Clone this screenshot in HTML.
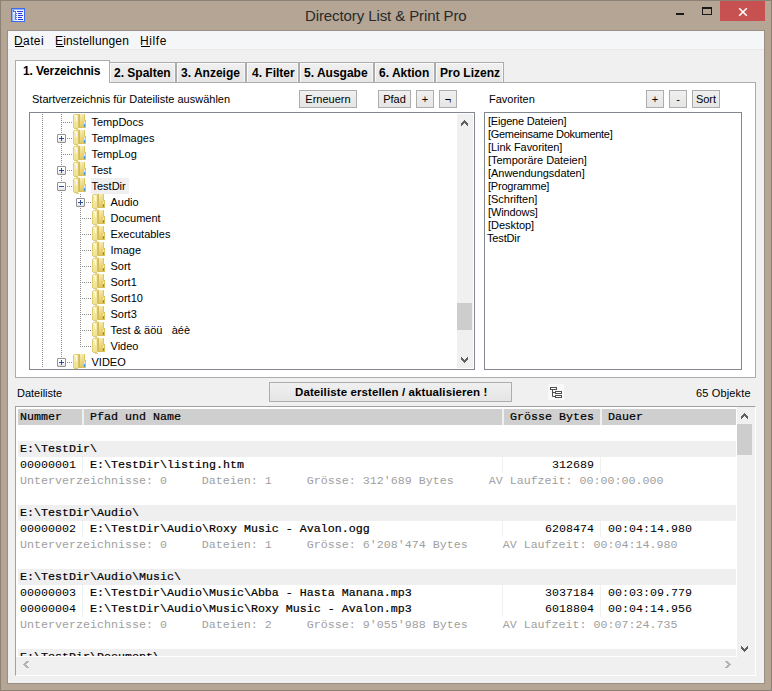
<!DOCTYPE html><html><head><meta charset="utf-8"><title>Directory List &amp; Print Pro</title><style>
*{margin:0;padding:0;box-sizing:border-box}
html,body{width:772px;height:691px;overflow:hidden;background:#b4a595;font-family:'Liberation Sans', sans-serif;}
.a{position:absolute}
.t{position:absolute;white-space:pre;font-size:11px;line-height:16px;color:#000}
.btn{position:absolute;border:1px solid #adadad;background:linear-gradient(#f0f0f0,#e5e5e5);}
.m{position:absolute;font-family:'Liberation Mono', monospace;font-size:11.67px;line-height:16px;white-space:pre;font-weight:normal;color:#000;-webkit-text-stroke:0.2px #000}
.g{color:#a0a0a0;-webkit-text-stroke:0}
.n{-webkit-text-stroke:0}
.d{position:absolute;background:#f0f0f0}
</style></head><body>
<div class="a" style="left:0;top:0;width:772px;height:691px;border:1px solid #8c8175;"></div>
<svg class="a" style="left:11px;top:8px" width="14" height="14" viewBox="0 0 14 14" shape-rendering="crispEdges">
<rect x="0" y="0" width="14" height="14" fill="#3b6cf0"/>
<rect x="1" y="1" width="12" height="12" fill="#8fb0f6"/>
<rect x="1.5" y="1.5" width="11" height="11" fill="#eef6ff"/>
<rect x="2" y="6" width="2" height="7" fill="#c8dcf8"/>
<rect x="2" y="2" width="1" height="2" fill="#4a68dc"/>
<rect x="3" y="3" width="2" height="1" fill="#4a68dc"/>
<rect x="4" y="4" width="1" height="8" fill="#5a78e0"/>
<rect x="5" y="5" width="1" height="1" fill="#5a78e0"/>
<rect x="5" y="7" width="1" height="1" fill="#5a78e0"/>
<rect x="5" y="9" width="1" height="1" fill="#5a78e0"/>
<rect x="5" y="11" width="1" height="1" fill="#5a78e0"/>
<rect x="6" y="3" width="6" height="1" fill="#3434d4"/>
<rect x="7" y="5" width="4" height="1" fill="#3434d4"/>
<rect x="7" y="7" width="5" height="1" fill="#3434d4"/>
<rect x="7" y="9" width="4" height="1" fill="#3434d4"/>
<rect x="7" y="11" width="5" height="1" fill="#3434d4"/>
</svg>
<div class="t" style="left:305px;top:6px;font-size:15px;line-height:20px;color:#2a2a2a;letter-spacing:-0.1px">Directory List &amp; Print Pro</div>
<div class="a" style="left:676px;top:13px;width:8px;height:2px;background:#1a1a1a"></div>
<div class="a" style="left:702px;top:7px;width:10px;height:8px;border:1px solid #1a1a1a;border-top-width:2px"></div>
<div class="a" style="left:720px;top:1px;width:45px;height:20px;background:#c75050"></div>
<svg class="a" style="left:738px;top:7px" width="10" height="10" viewBox="0 0 10 10"><path d="M1.2 1.2L8.8 8.8M8.8 1.2L1.2 8.8" stroke="#fff" stroke-width="1.6"/></svg>
<div class="a" style="left:7px;top:30px;width:758px;height:654px;background:#f0f0f0;border:1px solid #9a8f83"></div>
<div class="a" style="left:8px;top:31px;width:756px;height:18px;background:#f5f6f7"></div>
<div class="a" style="left:8px;top:49px;width:756px;height:1px;background:#e8e9ea"></div>
<div class="t" style="left:14px;top:33px;font-size:12px;letter-spacing:0.4px">Datei</div>
<div class="a" style="left:15px;top:46px;width:9px;height:1px;background:#000"></div>
<div class="t" style="left:55px;top:33px;font-size:12px;letter-spacing:0.15px">Einstellungen</div>
<div class="a" style="left:56px;top:46px;width:8px;height:1px;background:#000"></div>
<div class="t" style="left:140px;top:33px;font-size:12px;letter-spacing:0.6px">Hilfe</div>
<div class="a" style="left:141px;top:46px;width:9px;height:1px;background:#000"></div>
<div class="a" style="left:15px;top:82px;width:741px;height:296px;background:#fff;border:1px solid #acacac"></div>
<div class="a" style="left:109px;top:62px;width:67px;height:21px;border:1px solid #acacac;background:linear-gradient(#f0f0f0,#e5e5e5);box-shadow:inset 1px 1px 0 #fbfbfb,inset -1px 0 0 #f6f6f6"></div>
<div class="t" style="left:114px;top:65px;font-weight:bold;font-size:12px">2. Spalten</div>
<div class="a" style="left:176px;top:62px;width:70px;height:21px;border:1px solid #acacac;background:linear-gradient(#f0f0f0,#e5e5e5);box-shadow:inset 1px 1px 0 #fbfbfb,inset -1px 0 0 #f6f6f6"></div>
<div class="t" style="left:181px;top:65px;font-weight:bold;font-size:12px">3. Anzeige</div>
<div class="a" style="left:246px;top:62px;width:53px;height:21px;border:1px solid #acacac;background:linear-gradient(#f0f0f0,#e5e5e5);box-shadow:inset 1px 1px 0 #fbfbfb,inset -1px 0 0 #f6f6f6"></div>
<div class="t" style="left:252px;top:65px;font-weight:bold;font-size:12px">4. Filter</div>
<div class="a" style="left:299px;top:62px;width:75px;height:21px;border:1px solid #acacac;background:linear-gradient(#f0f0f0,#e5e5e5);box-shadow:inset 1px 1px 0 #fbfbfb,inset -1px 0 0 #f6f6f6"></div>
<div class="t" style="left:304px;top:65px;font-weight:bold;font-size:12px">5. Ausgabe</div>
<div class="a" style="left:374px;top:62px;width:61px;height:21px;border:1px solid #acacac;background:linear-gradient(#f0f0f0,#e5e5e5);box-shadow:inset 1px 1px 0 #fbfbfb,inset -1px 0 0 #f6f6f6"></div>
<div class="t" style="left:379px;top:65px;font-weight:bold;font-size:12px">6. Aktion</div>
<div class="a" style="left:435px;top:62px;width:69px;height:21px;border:1px solid #acacac;background:linear-gradient(#f0f0f0,#e5e5e5);box-shadow:inset 1px 1px 0 #fbfbfb,inset -1px 0 0 #f6f6f6"></div>
<div class="t" style="left:440px;top:65px;font-weight:bold;font-size:12px">Pro Lizenz</div>
<div class="a" style="left:15px;top:60px;width:95px;height:23px;border:1px solid #acacac;border-bottom:none;background:#fff"></div>
<div class="a" style="left:16px;top:82px;width:93px;height:1px;background:#fff"></div>
<div class="t" style="left:23px;top:63px;font-weight:bold;font-size:12px;letter-spacing:-0.15px">1. Verzeichnis</div>
<div class="t" style="left:32px;top:91px;letter-spacing:0px">Startverzeichnis für Dateiliste auswählen</div>
<div class="btn" style="left:299px;top:90px;width:58px;height:18px"></div>
<div class="t" style="left:299px;top:91px;width:58px;text-align:center">Erneuern</div>
<div class="btn" style="left:378px;top:90px;width:33px;height:18px"></div>
<div class="t" style="left:378px;top:91px;width:33px;text-align:center">Pfad</div>
<div class="btn" style="left:416px;top:90px;width:18px;height:18px"></div>
<div class="t" style="left:416px;top:91px;width:18px;text-align:center">+</div>
<div class="btn" style="left:439px;top:90px;width:18px;height:18px"></div>
<div class="t" style="left:439px;top:91px;width:18px;text-align:center">¬</div>
<div class="t" style="left:489px;top:91px">Favoriten</div>
<div class="btn" style="left:646px;top:90px;width:18px;height:18px"></div>
<div class="t" style="left:646px;top:91px;width:18px;text-align:center">+</div>
<div class="btn" style="left:669px;top:90px;width:18px;height:18px"></div>
<div class="t" style="left:669px;top:91px;width:18px;text-align:center">-</div>
<div class="btn" style="left:692px;top:90px;width:28px;height:18px"></div>
<div class="t" style="left:692px;top:91px;width:28px;text-align:center">Sort</div>
<div class="a" style="left:29px;top:112px;width:446px;height:258px;border:1px solid #828790;background:#fff"></div>
<svg width="0" height="0" style="position:absolute"><defs>
<linearGradient id="gf" x1="0" y1="0" x2="0" y2="1"><stop offset="0" stop-color="#f8f0b0"/><stop offset="1" stop-color="#efe092"/></linearGradient>
<linearGradient id="gb" x1="0" y1="0" x2="0.3" y2="1"><stop offset="0" stop-color="#faf2b6"/><stop offset="1" stop-color="#e0c660"/></linearGradient>
</defs></svg>
<div class="a" style="left:30px;top:113px;width:444px;height:256px;overflow:hidden">
<div class="a" style="left:-30px;top:-113px;width:772px;height:691px">
<div class="a" style="left:42px;top:112px;width:1px;height:256px;background:repeating-linear-gradient(to bottom,#8c8c8c 0 1px,transparent 1px 2px)"></div>
<div class="a" style="left:61px;top:112px;width:1px;height:251px;background:repeating-linear-gradient(to bottom,#8c8c8c 0 1px,transparent 1px 2px)"></div>
<div class="a" style="left:80px;top:194px;width:1px;height:153px;background:repeating-linear-gradient(to bottom,#8c8c8c 0 1px,transparent 1px 2px)"></div>
<div class="a" style="left:63px;top:122px;width:9px;height:1px;background:repeating-linear-gradient(to right,#8c8c8c 0 1px,transparent 1px 2px)"></div>
<svg class="a" style="left:73px;top:114px" width="13" height="16" viewBox="0 0 13 16" shape-rendering="crispEdges">
<rect x="6" y="0" width="6" height="14" fill="url(#gb)"/>
<rect x="12" y="6" width="1" height="8" fill="#dcc35e"/>
<rect x="11" y="0" width="1" height="6" fill="#dfc764"/>
<rect x="6" y="0" width="1" height="14" fill="#d4bc5c"/>
<rect x="7" y="13" width="5" height="1" fill="#d9c05a"/>
<rect x="1" y="0" width="5" height="1" fill="#e6d27a"/>
<rect x="0" y="1" width="1" height="13" fill="#e2cd72"/>
<rect x="1" y="1" width="4" height="13" fill="url(#gf)"/>
<rect x="5" y="1" width="1" height="13" fill="#dcc466"/>
<rect x="1" y="14" width="4" height="1" fill="#e0ca6c"/>
<rect x="3" y="15" width="3" height="1" fill="#e6d88e"/>
<rect x="2" y="1" width="1" height="2" fill="#fffef4"/>
<rect x="3" y="2" width="1" height="5" fill="#fffef4"/>
<rect x="11" y="8" width="1" height="2" fill="#e4f0f6"/>
<rect x="11" y="10" width="1" height="3" fill="#3a98de"/>
</svg>
<div class="t" style="left:91.5px;top:114px;letter-spacing:0px">TempDocs</div>
<div class="a" style="left:67px;top:138px;width:5px;height:1px;background:repeating-linear-gradient(to right,#8c8c8c 0 1px,transparent 1px 2px)"></div>
<svg class="a" style="left:73px;top:130px" width="13" height="16" viewBox="0 0 13 16" shape-rendering="crispEdges">
<rect x="6" y="0" width="6" height="14" fill="url(#gb)"/>
<rect x="12" y="6" width="1" height="8" fill="#dcc35e"/>
<rect x="11" y="0" width="1" height="6" fill="#dfc764"/>
<rect x="6" y="0" width="1" height="14" fill="#d4bc5c"/>
<rect x="7" y="13" width="5" height="1" fill="#d9c05a"/>
<rect x="1" y="0" width="5" height="1" fill="#e6d27a"/>
<rect x="0" y="1" width="1" height="13" fill="#e2cd72"/>
<rect x="1" y="1" width="4" height="13" fill="url(#gf)"/>
<rect x="5" y="1" width="1" height="13" fill="#dcc466"/>
<rect x="1" y="14" width="4" height="1" fill="#e0ca6c"/>
<rect x="3" y="15" width="3" height="1" fill="#e6d88e"/>
<rect x="2" y="1" width="1" height="2" fill="#fffef4"/>
<rect x="3" y="2" width="1" height="5" fill="#fffef4"/>
<rect x="11" y="8" width="1" height="2" fill="#e4f0f6"/>
<rect x="11" y="10" width="1" height="3" fill="#3a98de"/>
</svg>
<div class="t" style="left:91.5px;top:130px;letter-spacing:0px">TempImages</div>
<div class="a" style="left:57px;top:133px;width:9px;height:11px;background:#fff"></div>
<div class="a" style="left:57px;top:134px;width:9px;height:9px;border:1px solid #919191;border-radius:1px;background:linear-gradient(#fff 0,#fff 45%,#e2e2e2 100%)"></div>
<div class="a" style="left:59px;top:138px;width:5px;height:1px;background:#2b4f9c"></div>
<div class="a" style="left:61px;top:136px;width:1px;height:5px;background:#2b4f9c"></div>
<div class="a" style="left:63px;top:154px;width:9px;height:1px;background:repeating-linear-gradient(to right,#8c8c8c 0 1px,transparent 1px 2px)"></div>
<svg class="a" style="left:73px;top:146px" width="13" height="16" viewBox="0 0 13 16" shape-rendering="crispEdges">
<rect x="6" y="0" width="6" height="14" fill="url(#gb)"/>
<rect x="12" y="6" width="1" height="8" fill="#dcc35e"/>
<rect x="11" y="0" width="1" height="6" fill="#dfc764"/>
<rect x="6" y="0" width="1" height="14" fill="#d4bc5c"/>
<rect x="7" y="13" width="5" height="1" fill="#d9c05a"/>
<rect x="1" y="0" width="5" height="1" fill="#e6d27a"/>
<rect x="0" y="1" width="1" height="13" fill="#e2cd72"/>
<rect x="1" y="1" width="4" height="13" fill="url(#gf)"/>
<rect x="5" y="1" width="1" height="13" fill="#dcc466"/>
<rect x="1" y="14" width="4" height="1" fill="#e0ca6c"/>
<rect x="3" y="15" width="3" height="1" fill="#e6d88e"/>
<rect x="2" y="1" width="1" height="2" fill="#fffef4"/>
<rect x="3" y="2" width="1" height="5" fill="#fffef4"/>
<rect x="11" y="8" width="1" height="2" fill="#e4f0f6"/>
<rect x="11" y="10" width="1" height="3" fill="#3a98de"/>
</svg>
<div class="t" style="left:91.5px;top:146px;letter-spacing:0px">TempLog</div>
<div class="a" style="left:67px;top:170px;width:5px;height:1px;background:repeating-linear-gradient(to right,#8c8c8c 0 1px,transparent 1px 2px)"></div>
<svg class="a" style="left:73px;top:162px" width="13" height="16" viewBox="0 0 13 16" shape-rendering="crispEdges">
<rect x="6" y="0" width="6" height="14" fill="url(#gb)"/>
<rect x="12" y="6" width="1" height="8" fill="#dcc35e"/>
<rect x="11" y="0" width="1" height="6" fill="#dfc764"/>
<rect x="6" y="0" width="1" height="14" fill="#d4bc5c"/>
<rect x="7" y="13" width="5" height="1" fill="#d9c05a"/>
<rect x="1" y="0" width="5" height="1" fill="#e6d27a"/>
<rect x="0" y="1" width="1" height="13" fill="#e2cd72"/>
<rect x="1" y="1" width="4" height="13" fill="url(#gf)"/>
<rect x="5" y="1" width="1" height="13" fill="#dcc466"/>
<rect x="1" y="14" width="4" height="1" fill="#e0ca6c"/>
<rect x="3" y="15" width="3" height="1" fill="#e6d88e"/>
<rect x="2" y="1" width="1" height="2" fill="#fffef4"/>
<rect x="3" y="2" width="1" height="5" fill="#fffef4"/>
<rect x="11" y="8" width="1" height="2" fill="#e4f0f6"/>
<rect x="11" y="10" width="1" height="3" fill="#3a98de"/>
</svg>
<div class="t" style="left:91.5px;top:162px;letter-spacing:0px">Test</div>
<div class="a" style="left:57px;top:165px;width:9px;height:11px;background:#fff"></div>
<div class="a" style="left:57px;top:166px;width:9px;height:9px;border:1px solid #919191;border-radius:1px;background:linear-gradient(#fff 0,#fff 45%,#e2e2e2 100%)"></div>
<div class="a" style="left:59px;top:170px;width:5px;height:1px;background:#2b4f9c"></div>
<div class="a" style="left:61px;top:168px;width:1px;height:5px;background:#2b4f9c"></div>
<div class="a" style="left:67px;top:186px;width:5px;height:1px;background:repeating-linear-gradient(to right,#8c8c8c 0 1px,transparent 1px 2px)"></div>
<svg class="a" style="left:73px;top:178px" width="13" height="16" viewBox="0 0 13 16" shape-rendering="crispEdges">
<rect x="6" y="0" width="6" height="14" fill="url(#gb)"/>
<rect x="12" y="6" width="1" height="8" fill="#dcc35e"/>
<rect x="11" y="0" width="1" height="6" fill="#dfc764"/>
<rect x="6" y="0" width="1" height="14" fill="#d4bc5c"/>
<rect x="7" y="13" width="5" height="1" fill="#d9c05a"/>
<rect x="1" y="0" width="5" height="1" fill="#e6d27a"/>
<rect x="0" y="1" width="1" height="13" fill="#e2cd72"/>
<rect x="1" y="1" width="4" height="13" fill="url(#gf)"/>
<rect x="5" y="1" width="1" height="13" fill="#dcc466"/>
<rect x="1" y="14" width="4" height="1" fill="#e0ca6c"/>
<rect x="3" y="15" width="3" height="1" fill="#e6d88e"/>
<rect x="2" y="1" width="1" height="2" fill="#fffef4"/>
<rect x="3" y="2" width="1" height="5" fill="#fffef4"/>
<rect x="11" y="8" width="1" height="2" fill="#e4f0f6"/>
<rect x="11" y="10" width="1" height="3" fill="#3a98de"/>
</svg>
<div class="a" style="left:91px;top:178px;width:38px;height:16px;background:#f0f0f0"></div>
<div class="t" style="left:91.5px;top:178px;letter-spacing:0px">TestDir</div>
<div class="a" style="left:57px;top:181px;width:9px;height:11px;background:#fff"></div>
<div class="a" style="left:57px;top:182px;width:9px;height:9px;border:1px solid #919191;border-radius:1px;background:linear-gradient(#fff 0,#fff 45%,#e2e2e2 100%)"></div>
<div class="a" style="left:59px;top:186px;width:5px;height:1px;background:#2b4f9c"></div>
<div class="a" style="left:86px;top:202px;width:5px;height:1px;background:repeating-linear-gradient(to right,#8c8c8c 0 1px,transparent 1px 2px)"></div>
<svg class="a" style="left:92px;top:194px" width="13" height="16" viewBox="0 0 13 16" shape-rendering="crispEdges">
<rect x="6" y="0" width="6" height="14" fill="url(#gb)"/>
<rect x="12" y="6" width="1" height="8" fill="#dcc35e"/>
<rect x="11" y="0" width="1" height="6" fill="#dfc764"/>
<rect x="6" y="0" width="1" height="14" fill="#d4bc5c"/>
<rect x="7" y="13" width="5" height="1" fill="#d9c05a"/>
<rect x="1" y="0" width="5" height="1" fill="#e6d27a"/>
<rect x="0" y="1" width="1" height="13" fill="#e2cd72"/>
<rect x="1" y="1" width="4" height="13" fill="url(#gf)"/>
<rect x="5" y="1" width="1" height="13" fill="#dcc466"/>
<rect x="1" y="14" width="4" height="1" fill="#e0ca6c"/>
<rect x="3" y="15" width="3" height="1" fill="#e6d88e"/>
<rect x="2" y="1" width="1" height="2" fill="#fffef4"/>
<rect x="3" y="2" width="1" height="5" fill="#fffef4"/>
<rect x="11" y="8" width="1" height="2" fill="#e4f0f6"/>
<rect x="11" y="10" width="1" height="3" fill="#3a98de"/>
</svg>
<div class="t" style="left:110.5px;top:194px;letter-spacing:0px">Audio</div>
<div class="a" style="left:76px;top:197px;width:9px;height:11px;background:#fff"></div>
<div class="a" style="left:76px;top:198px;width:9px;height:9px;border:1px solid #919191;border-radius:1px;background:linear-gradient(#fff 0,#fff 45%,#e2e2e2 100%)"></div>
<div class="a" style="left:78px;top:202px;width:5px;height:1px;background:#2b4f9c"></div>
<div class="a" style="left:80px;top:200px;width:1px;height:5px;background:#2b4f9c"></div>
<div class="a" style="left:82px;top:218px;width:9px;height:1px;background:repeating-linear-gradient(to right,#8c8c8c 0 1px,transparent 1px 2px)"></div>
<svg class="a" style="left:92px;top:210px" width="13" height="16" viewBox="0 0 13 16" shape-rendering="crispEdges">
<rect x="6" y="0" width="6" height="14" fill="url(#gb)"/>
<rect x="12" y="6" width="1" height="8" fill="#dcc35e"/>
<rect x="11" y="0" width="1" height="6" fill="#dfc764"/>
<rect x="6" y="0" width="1" height="14" fill="#d4bc5c"/>
<rect x="7" y="13" width="5" height="1" fill="#d9c05a"/>
<rect x="1" y="0" width="5" height="1" fill="#e6d27a"/>
<rect x="0" y="1" width="1" height="13" fill="#e2cd72"/>
<rect x="1" y="1" width="4" height="13" fill="url(#gf)"/>
<rect x="5" y="1" width="1" height="13" fill="#dcc466"/>
<rect x="1" y="14" width="4" height="1" fill="#e0ca6c"/>
<rect x="3" y="15" width="3" height="1" fill="#e6d88e"/>
<rect x="2" y="1" width="1" height="2" fill="#fffef4"/>
<rect x="3" y="2" width="1" height="5" fill="#fffef4"/>
<rect x="11" y="8" width="1" height="2" fill="#e4f0f6"/>
<rect x="11" y="10" width="1" height="3" fill="#3a98de"/>
</svg>
<div class="t" style="left:110.5px;top:210px;letter-spacing:0px">Document</div>
<div class="a" style="left:82px;top:234px;width:9px;height:1px;background:repeating-linear-gradient(to right,#8c8c8c 0 1px,transparent 1px 2px)"></div>
<svg class="a" style="left:92px;top:226px" width="13" height="16" viewBox="0 0 13 16" shape-rendering="crispEdges">
<rect x="6" y="0" width="6" height="14" fill="url(#gb)"/>
<rect x="12" y="6" width="1" height="8" fill="#dcc35e"/>
<rect x="11" y="0" width="1" height="6" fill="#dfc764"/>
<rect x="6" y="0" width="1" height="14" fill="#d4bc5c"/>
<rect x="7" y="13" width="5" height="1" fill="#d9c05a"/>
<rect x="1" y="0" width="5" height="1" fill="#e6d27a"/>
<rect x="0" y="1" width="1" height="13" fill="#e2cd72"/>
<rect x="1" y="1" width="4" height="13" fill="url(#gf)"/>
<rect x="5" y="1" width="1" height="13" fill="#dcc466"/>
<rect x="1" y="14" width="4" height="1" fill="#e0ca6c"/>
<rect x="3" y="15" width="3" height="1" fill="#e6d88e"/>
<rect x="2" y="1" width="1" height="2" fill="#fffef4"/>
<rect x="3" y="2" width="1" height="5" fill="#fffef4"/>
<rect x="11" y="8" width="1" height="2" fill="#e4f0f6"/>
<rect x="11" y="10" width="1" height="3" fill="#3a98de"/>
</svg>
<div class="t" style="left:110.5px;top:226px;letter-spacing:0px">Executables</div>
<div class="a" style="left:82px;top:250px;width:9px;height:1px;background:repeating-linear-gradient(to right,#8c8c8c 0 1px,transparent 1px 2px)"></div>
<svg class="a" style="left:92px;top:242px" width="13" height="16" viewBox="0 0 13 16" shape-rendering="crispEdges">
<rect x="6" y="0" width="6" height="14" fill="url(#gb)"/>
<rect x="12" y="6" width="1" height="8" fill="#dcc35e"/>
<rect x="11" y="0" width="1" height="6" fill="#dfc764"/>
<rect x="6" y="0" width="1" height="14" fill="#d4bc5c"/>
<rect x="7" y="13" width="5" height="1" fill="#d9c05a"/>
<rect x="1" y="0" width="5" height="1" fill="#e6d27a"/>
<rect x="0" y="1" width="1" height="13" fill="#e2cd72"/>
<rect x="1" y="1" width="4" height="13" fill="url(#gf)"/>
<rect x="5" y="1" width="1" height="13" fill="#dcc466"/>
<rect x="1" y="14" width="4" height="1" fill="#e0ca6c"/>
<rect x="3" y="15" width="3" height="1" fill="#e6d88e"/>
<rect x="2" y="1" width="1" height="2" fill="#fffef4"/>
<rect x="3" y="2" width="1" height="5" fill="#fffef4"/>
<rect x="11" y="8" width="1" height="2" fill="#e4f0f6"/>
<rect x="11" y="10" width="1" height="3" fill="#3a98de"/>
</svg>
<div class="t" style="left:110.5px;top:242px;letter-spacing:0px">Image</div>
<div class="a" style="left:82px;top:266px;width:9px;height:1px;background:repeating-linear-gradient(to right,#8c8c8c 0 1px,transparent 1px 2px)"></div>
<svg class="a" style="left:92px;top:258px" width="13" height="16" viewBox="0 0 13 16" shape-rendering="crispEdges">
<rect x="6" y="0" width="6" height="14" fill="url(#gb)"/>
<rect x="12" y="6" width="1" height="8" fill="#dcc35e"/>
<rect x="11" y="0" width="1" height="6" fill="#dfc764"/>
<rect x="6" y="0" width="1" height="14" fill="#d4bc5c"/>
<rect x="7" y="13" width="5" height="1" fill="#d9c05a"/>
<rect x="1" y="0" width="5" height="1" fill="#e6d27a"/>
<rect x="0" y="1" width="1" height="13" fill="#e2cd72"/>
<rect x="1" y="1" width="4" height="13" fill="url(#gf)"/>
<rect x="5" y="1" width="1" height="13" fill="#dcc466"/>
<rect x="1" y="14" width="4" height="1" fill="#e0ca6c"/>
<rect x="3" y="15" width="3" height="1" fill="#e6d88e"/>
<rect x="2" y="1" width="1" height="2" fill="#fffef4"/>
<rect x="3" y="2" width="1" height="5" fill="#fffef4"/>
<rect x="11" y="8" width="1" height="2" fill="#e4f0f6"/>
<rect x="11" y="10" width="1" height="3" fill="#3a98de"/>
</svg>
<div class="t" style="left:110.5px;top:258px;letter-spacing:0px">Sort</div>
<div class="a" style="left:82px;top:282px;width:9px;height:1px;background:repeating-linear-gradient(to right,#8c8c8c 0 1px,transparent 1px 2px)"></div>
<svg class="a" style="left:92px;top:274px" width="13" height="16" viewBox="0 0 13 16" shape-rendering="crispEdges">
<rect x="6" y="0" width="6" height="14" fill="url(#gb)"/>
<rect x="12" y="6" width="1" height="8" fill="#dcc35e"/>
<rect x="11" y="0" width="1" height="6" fill="#dfc764"/>
<rect x="6" y="0" width="1" height="14" fill="#d4bc5c"/>
<rect x="7" y="13" width="5" height="1" fill="#d9c05a"/>
<rect x="1" y="0" width="5" height="1" fill="#e6d27a"/>
<rect x="0" y="1" width="1" height="13" fill="#e2cd72"/>
<rect x="1" y="1" width="4" height="13" fill="url(#gf)"/>
<rect x="5" y="1" width="1" height="13" fill="#dcc466"/>
<rect x="1" y="14" width="4" height="1" fill="#e0ca6c"/>
<rect x="3" y="15" width="3" height="1" fill="#e6d88e"/>
<rect x="2" y="1" width="1" height="2" fill="#fffef4"/>
<rect x="3" y="2" width="1" height="5" fill="#fffef4"/>
<rect x="11" y="8" width="1" height="2" fill="#e4f0f6"/>
<rect x="11" y="10" width="1" height="3" fill="#3a98de"/>
</svg>
<div class="t" style="left:110.5px;top:274px;letter-spacing:0px">Sort1</div>
<div class="a" style="left:82px;top:298px;width:9px;height:1px;background:repeating-linear-gradient(to right,#8c8c8c 0 1px,transparent 1px 2px)"></div>
<svg class="a" style="left:92px;top:290px" width="13" height="16" viewBox="0 0 13 16" shape-rendering="crispEdges">
<rect x="6" y="0" width="6" height="14" fill="url(#gb)"/>
<rect x="12" y="6" width="1" height="8" fill="#dcc35e"/>
<rect x="11" y="0" width="1" height="6" fill="#dfc764"/>
<rect x="6" y="0" width="1" height="14" fill="#d4bc5c"/>
<rect x="7" y="13" width="5" height="1" fill="#d9c05a"/>
<rect x="1" y="0" width="5" height="1" fill="#e6d27a"/>
<rect x="0" y="1" width="1" height="13" fill="#e2cd72"/>
<rect x="1" y="1" width="4" height="13" fill="url(#gf)"/>
<rect x="5" y="1" width="1" height="13" fill="#dcc466"/>
<rect x="1" y="14" width="4" height="1" fill="#e0ca6c"/>
<rect x="3" y="15" width="3" height="1" fill="#e6d88e"/>
<rect x="2" y="1" width="1" height="2" fill="#fffef4"/>
<rect x="3" y="2" width="1" height="5" fill="#fffef4"/>
<rect x="11" y="8" width="1" height="2" fill="#e4f0f6"/>
<rect x="11" y="10" width="1" height="3" fill="#3a98de"/>
</svg>
<div class="t" style="left:110.5px;top:290px;letter-spacing:0px">Sort10</div>
<div class="a" style="left:82px;top:314px;width:9px;height:1px;background:repeating-linear-gradient(to right,#8c8c8c 0 1px,transparent 1px 2px)"></div>
<svg class="a" style="left:92px;top:306px" width="13" height="16" viewBox="0 0 13 16" shape-rendering="crispEdges">
<rect x="6" y="0" width="6" height="14" fill="url(#gb)"/>
<rect x="12" y="6" width="1" height="8" fill="#dcc35e"/>
<rect x="11" y="0" width="1" height="6" fill="#dfc764"/>
<rect x="6" y="0" width="1" height="14" fill="#d4bc5c"/>
<rect x="7" y="13" width="5" height="1" fill="#d9c05a"/>
<rect x="1" y="0" width="5" height="1" fill="#e6d27a"/>
<rect x="0" y="1" width="1" height="13" fill="#e2cd72"/>
<rect x="1" y="1" width="4" height="13" fill="url(#gf)"/>
<rect x="5" y="1" width="1" height="13" fill="#dcc466"/>
<rect x="1" y="14" width="4" height="1" fill="#e0ca6c"/>
<rect x="3" y="15" width="3" height="1" fill="#e6d88e"/>
<rect x="2" y="1" width="1" height="2" fill="#fffef4"/>
<rect x="3" y="2" width="1" height="5" fill="#fffef4"/>
<rect x="11" y="8" width="1" height="2" fill="#e4f0f6"/>
<rect x="11" y="10" width="1" height="3" fill="#3a98de"/>
</svg>
<div class="t" style="left:110.5px;top:306px;letter-spacing:0px">Sort3</div>
<div class="a" style="left:82px;top:330px;width:9px;height:1px;background:repeating-linear-gradient(to right,#8c8c8c 0 1px,transparent 1px 2px)"></div>
<svg class="a" style="left:92px;top:322px" width="13" height="16" viewBox="0 0 13 16" shape-rendering="crispEdges">
<rect x="6" y="0" width="6" height="14" fill="url(#gb)"/>
<rect x="12" y="6" width="1" height="8" fill="#dcc35e"/>
<rect x="11" y="0" width="1" height="6" fill="#dfc764"/>
<rect x="6" y="0" width="1" height="14" fill="#d4bc5c"/>
<rect x="7" y="13" width="5" height="1" fill="#d9c05a"/>
<rect x="1" y="0" width="5" height="1" fill="#e6d27a"/>
<rect x="0" y="1" width="1" height="13" fill="#e2cd72"/>
<rect x="1" y="1" width="4" height="13" fill="url(#gf)"/>
<rect x="5" y="1" width="1" height="13" fill="#dcc466"/>
<rect x="1" y="14" width="4" height="1" fill="#e0ca6c"/>
<rect x="3" y="15" width="3" height="1" fill="#e6d88e"/>
<rect x="2" y="1" width="1" height="2" fill="#fffef4"/>
<rect x="3" y="2" width="1" height="5" fill="#fffef4"/>
<rect x="11" y="8" width="1" height="2" fill="#e4f0f6"/>
<rect x="11" y="10" width="1" height="3" fill="#3a98de"/>
</svg>
<div class="t" style="left:110.5px;top:322px;letter-spacing:0px">Test &amp; äöü   àéè</div>
<div class="a" style="left:82px;top:346px;width:9px;height:1px;background:repeating-linear-gradient(to right,#8c8c8c 0 1px,transparent 1px 2px)"></div>
<svg class="a" style="left:92px;top:338px" width="13" height="16" viewBox="0 0 13 16" shape-rendering="crispEdges">
<rect x="6" y="0" width="6" height="14" fill="url(#gb)"/>
<rect x="12" y="6" width="1" height="8" fill="#dcc35e"/>
<rect x="11" y="0" width="1" height="6" fill="#dfc764"/>
<rect x="6" y="0" width="1" height="14" fill="#d4bc5c"/>
<rect x="7" y="13" width="5" height="1" fill="#d9c05a"/>
<rect x="1" y="0" width="5" height="1" fill="#e6d27a"/>
<rect x="0" y="1" width="1" height="13" fill="#e2cd72"/>
<rect x="1" y="1" width="4" height="13" fill="url(#gf)"/>
<rect x="5" y="1" width="1" height="13" fill="#dcc466"/>
<rect x="1" y="14" width="4" height="1" fill="#e0ca6c"/>
<rect x="3" y="15" width="3" height="1" fill="#e6d88e"/>
<rect x="2" y="1" width="1" height="2" fill="#fffef4"/>
<rect x="3" y="2" width="1" height="5" fill="#fffef4"/>
<rect x="11" y="8" width="1" height="2" fill="#e4f0f6"/>
<rect x="11" y="10" width="1" height="3" fill="#3a98de"/>
</svg>
<div class="t" style="left:110.5px;top:338px;letter-spacing:0px">Video</div>
<div class="a" style="left:67px;top:362px;width:5px;height:1px;background:repeating-linear-gradient(to right,#8c8c8c 0 1px,transparent 1px 2px)"></div>
<svg class="a" style="left:73px;top:354px" width="13" height="16" viewBox="0 0 13 16" shape-rendering="crispEdges">
<rect x="6" y="0" width="6" height="14" fill="url(#gb)"/>
<rect x="12" y="6" width="1" height="8" fill="#dcc35e"/>
<rect x="11" y="0" width="1" height="6" fill="#dfc764"/>
<rect x="6" y="0" width="1" height="14" fill="#d4bc5c"/>
<rect x="7" y="13" width="5" height="1" fill="#d9c05a"/>
<rect x="1" y="0" width="5" height="1" fill="#e6d27a"/>
<rect x="0" y="1" width="1" height="13" fill="#e2cd72"/>
<rect x="1" y="1" width="4" height="13" fill="url(#gf)"/>
<rect x="5" y="1" width="1" height="13" fill="#dcc466"/>
<rect x="1" y="14" width="4" height="1" fill="#e0ca6c"/>
<rect x="3" y="15" width="3" height="1" fill="#e6d88e"/>
<rect x="2" y="1" width="1" height="2" fill="#fffef4"/>
<rect x="3" y="2" width="1" height="5" fill="#fffef4"/>
<rect x="11" y="8" width="1" height="2" fill="#e4f0f6"/>
<rect x="11" y="10" width="1" height="3" fill="#3a98de"/>
</svg>
<div class="t" style="left:91.5px;top:354px;letter-spacing:0px">VIDEO</div>
<div class="a" style="left:57px;top:357px;width:9px;height:11px;background:#fff"></div>
<div class="a" style="left:57px;top:358px;width:9px;height:9px;border:1px solid #919191;border-radius:1px;background:linear-gradient(#fff 0,#fff 45%,#e2e2e2 100%)"></div>
<div class="a" style="left:59px;top:362px;width:5px;height:1px;background:#2b4f9c"></div>
<div class="a" style="left:61px;top:360px;width:1px;height:5px;background:#2b4f9c"></div>
</div></div>
<div class="a" style="left:457px;top:114px;width:16px;height:254px;background:#f0f0f0"></div>
<div class="a" style="left:457px;top:303px;width:15px;height:27px;background:#cdcdcd"></div>
<svg class="a" style="left:461px;top:120px" width="7" height="6" viewBox="0 0 7 6" shape-rendering="crispEdges" fill="#606060"><rect x="3" y="0" width="1" height="1"/><rect x="2" y="1" width="1" height="1"/><rect x="3" y="1" width="1" height="1"/><rect x="4" y="1" width="1" height="1"/><rect x="1" y="2" width="1" height="1"/><rect x="2" y="2" width="1" height="1"/><rect x="3" y="2" width="1" height="1"/><rect x="4" y="2" width="1" height="1"/><rect x="5" y="2" width="1" height="1"/><rect x="0" y="3" width="1" height="1"/><rect x="1" y="3" width="1" height="1"/><rect x="2" y="3" width="1" height="1"/><rect x="4" y="3" width="1" height="1"/><rect x="5" y="3" width="1" height="1"/><rect x="6" y="3" width="1" height="1"/><rect x="0" y="4" width="1" height="1"/><rect x="1" y="4" width="1" height="1"/><rect x="5" y="4" width="1" height="1"/><rect x="6" y="4" width="1" height="1"/><rect x="0" y="5" width="1" height="1"/><rect x="6" y="5" width="1" height="1"/></svg>
<svg class="a" style="left:461px;top:357px" width="7" height="6" viewBox="0 0 7 6" shape-rendering="crispEdges" fill="#606060"><rect x="0" y="0" width="1" height="1"/><rect x="6" y="0" width="1" height="1"/><rect x="0" y="1" width="1" height="1"/><rect x="1" y="1" width="1" height="1"/><rect x="5" y="1" width="1" height="1"/><rect x="6" y="1" width="1" height="1"/><rect x="0" y="2" width="1" height="1"/><rect x="1" y="2" width="1" height="1"/><rect x="2" y="2" width="1" height="1"/><rect x="4" y="2" width="1" height="1"/><rect x="5" y="2" width="1" height="1"/><rect x="6" y="2" width="1" height="1"/><rect x="1" y="3" width="1" height="1"/><rect x="2" y="3" width="1" height="1"/><rect x="3" y="3" width="1" height="1"/><rect x="4" y="3" width="1" height="1"/><rect x="5" y="3" width="1" height="1"/><rect x="2" y="4" width="1" height="1"/><rect x="3" y="4" width="1" height="1"/><rect x="4" y="4" width="1" height="1"/><rect x="3" y="5" width="1" height="1"/></svg>
<div class="a" style="left:484px;top:112px;width:258px;height:258px;border:1px solid #828790;background:#fff"></div>
<div class="t" style="left:488px;top:113px;letter-spacing:-0.19px">[Eigene Dateien]</div>
<div class="t" style="left:488px;top:126px;letter-spacing:-0.29px">[Gemeinsame Dokumente]</div>
<div class="t" style="left:488px;top:139px;letter-spacing:-0.06px">[Link Favoriten]</div>
<div class="t" style="left:488px;top:152px;letter-spacing:-0.05px">[Temporäre Dateien]</div>
<div class="t" style="left:488px;top:165px;letter-spacing:-0.03px">[Anwendungsdaten]</div>
<div class="t" style="left:488px;top:178px;letter-spacing:-0.22px">[Programme]</div>
<div class="t" style="left:488px;top:191px;letter-spacing:-0.02px">[Schriften]</div>
<div class="t" style="left:488px;top:204px;letter-spacing:-0.11px">[Windows]</div>
<div class="t" style="left:488px;top:217px;letter-spacing:-0.04px">[Desktop]</div>
<div class="t" style="left:487px;top:230px;letter-spacing:-0.15px">TestDir</div>
<div class="t" style="left:17px;top:385px">Dateiliste</div>
<div class="btn" style="left:269px;top:382px;width:243px;height:20px"></div>
<div class="t" style="left:295px;top:384px;font-weight:bold;font-size:11.5px;letter-spacing:0.1px">Dateiliste erstellen / aktualisieren !</div>
<svg class="a" style="left:548px;top:384px" width="16" height="16" viewBox="0 0 16 16">
<rect x="0" y="0" width="16" height="16" fill="#f9f9f9"/>
<g fill="#fff" stroke="#505050" stroke-width="1">
<rect x="2.5" y="3.5" width="6" height="2"/>
<rect x="7.5" y="7.5" width="6" height="2"/>
<rect x="7.5" y="11.5" width="6" height="2"/>
</g>
<path d="M4.5 5.5 V12.5 H7.5 M4.5 8.5 H7.5" fill="none" stroke="#505050" stroke-width="1"/>
</svg>
<div class="t" style="left:696px;top:385px;letter-spacing:0.15px">65 Objekte</div>
<div class="a" style="left:15px;top:406px;width:741px;height:270px;background:#fff;border:1px solid;border-color:#a0a0a0 #fff #fff #a0a0a0"></div>
<div class="a" style="left:18px;top:409px;width:719px;height:247px;overflow:hidden">
<div class="a" style="left:-18px;top:-409px;width:772px;height:691px">
<div class="a" style="left:18px;top:409px;width:718px;height:16px;background:#cfcfcf"></div>
<div class="d" style="left:82px;top:409px;width:2px;height:16px"></div>
<div class="d" style="left:502px;top:409px;width:2px;height:16px"></div>
<div class="d" style="left:600px;top:409px;width:2px;height:16px"></div>
<div class="m " style="left:20px;top:409px;">Nummer</div>
<div class="m " style="left:90px;top:409px;">Pfad und Name</div>
<div class="m " style="left:510px;top:409px;">Grösse Bytes</div>
<div class="m " style="left:608px;top:409px;">Dauer</div>
<div class="a" style="left:18px;top:441px;width:718px;height:16px;background:#efefef"></div>
<div class="m " style="left:20px;top:441px;">E:\TestDir\</div>
<div class="d" style="left:82px;top:457px;width:1px;height:16px"></div>
<div class="d" style="left:502px;top:457px;width:1px;height:16px"></div>
<div class="d" style="left:600px;top:457px;width:1px;height:16px"></div>
<div class="m n" style="left:20px;top:457px;">00000001</div>
<div class="m " style="left:90px;top:457px;">E:\TestDir\listing.htm</div>
<div class="m n" style="left:552px;top:457px;">312689</div>
<div class="m g" style="left:20px;top:473px;">Unterverzeichnisse: 0     Dateien: 1     Grösse: 312'689 Bytes     AV Laufzeit: 00:00:00.000</div>
<div class="a" style="left:18px;top:505px;width:718px;height:16px;background:#efefef"></div>
<div class="m " style="left:20px;top:505px;">E:\TestDir\Audio\</div>
<div class="d" style="left:82px;top:521px;width:1px;height:16px"></div>
<div class="d" style="left:502px;top:521px;width:1px;height:16px"></div>
<div class="d" style="left:600px;top:521px;width:1px;height:16px"></div>
<div class="m n" style="left:20px;top:521px;">00000002</div>
<div class="m " style="left:90px;top:521px;">E:\TestDir\Audio\Roxy Music - Avalon.ogg</div>
<div class="m n" style="left:545px;top:521px;">6208474</div>
<div class="m n" style="left:608px;top:521px;">00:04:14.980</div>
<div class="m g" style="left:20px;top:537px;">Unterverzeichnisse: 0     Dateien: 1     Grösse: 6'208'474 Bytes     AV Laufzeit: 00:04:14.980</div>
<div class="a" style="left:18px;top:569px;width:718px;height:16px;background:#efefef"></div>
<div class="m " style="left:20px;top:569px;">E:\TestDir\Audio\Music\</div>
<div class="d" style="left:82px;top:585px;width:1px;height:16px"></div>
<div class="d" style="left:502px;top:585px;width:1px;height:16px"></div>
<div class="d" style="left:600px;top:585px;width:1px;height:16px"></div>
<div class="m n" style="left:20px;top:585px;">00000003</div>
<div class="m " style="left:90px;top:585px;">E:\TestDir\Audio\Music\Abba - Hasta Manana.mp3</div>
<div class="m n" style="left:545px;top:585px;">3037184</div>
<div class="m n" style="left:608px;top:585px;">00:03:09.779</div>
<div class="d" style="left:82px;top:601px;width:1px;height:16px"></div>
<div class="d" style="left:502px;top:601px;width:1px;height:16px"></div>
<div class="d" style="left:600px;top:601px;width:1px;height:16px"></div>
<div class="m n" style="left:20px;top:601px;">00000004</div>
<div class="m " style="left:90px;top:601px;">E:\TestDir\Audio\Music\Roxy Music - Avalon.mp3</div>
<div class="m n" style="left:545px;top:601px;">6018804</div>
<div class="m n" style="left:608px;top:601px;">00:04:14.956</div>
<div class="m g" style="left:20px;top:617px;">Unterverzeichnisse: 0     Dateien: 2     Grösse: 9'055'988 Bytes     AV Laufzeit: 00:07:24.735</div>
<div class="a" style="left:18px;top:649px;width:718px;height:16px;background:#efefef"></div>
<div class="m " style="left:20px;top:649px;">E:\TestDir\Document\</div>
</div></div>
<div class="a" style="left:737px;top:407px;width:18px;height:268px;background:#f0f0f0"></div>
<div class="a" style="left:737px;top:424px;width:15px;height:31px;background:#cdcdcd"></div>
<svg class="a" style="left:741px;top:413px" width="7" height="6" viewBox="0 0 7 6" shape-rendering="crispEdges" fill="#606060"><rect x="3" y="0" width="1" height="1"/><rect x="2" y="1" width="1" height="1"/><rect x="3" y="1" width="1" height="1"/><rect x="4" y="1" width="1" height="1"/><rect x="1" y="2" width="1" height="1"/><rect x="2" y="2" width="1" height="1"/><rect x="3" y="2" width="1" height="1"/><rect x="4" y="2" width="1" height="1"/><rect x="5" y="2" width="1" height="1"/><rect x="0" y="3" width="1" height="1"/><rect x="1" y="3" width="1" height="1"/><rect x="2" y="3" width="1" height="1"/><rect x="4" y="3" width="1" height="1"/><rect x="5" y="3" width="1" height="1"/><rect x="6" y="3" width="1" height="1"/><rect x="0" y="4" width="1" height="1"/><rect x="1" y="4" width="1" height="1"/><rect x="5" y="4" width="1" height="1"/><rect x="6" y="4" width="1" height="1"/><rect x="0" y="5" width="1" height="1"/><rect x="6" y="5" width="1" height="1"/></svg>
<svg class="a" style="left:741px;top:646px" width="7" height="6" viewBox="0 0 7 6" shape-rendering="crispEdges" fill="#606060"><rect x="0" y="0" width="1" height="1"/><rect x="6" y="0" width="1" height="1"/><rect x="0" y="1" width="1" height="1"/><rect x="1" y="1" width="1" height="1"/><rect x="5" y="1" width="1" height="1"/><rect x="6" y="1" width="1" height="1"/><rect x="0" y="2" width="1" height="1"/><rect x="1" y="2" width="1" height="1"/><rect x="2" y="2" width="1" height="1"/><rect x="4" y="2" width="1" height="1"/><rect x="5" y="2" width="1" height="1"/><rect x="6" y="2" width="1" height="1"/><rect x="1" y="3" width="1" height="1"/><rect x="2" y="3" width="1" height="1"/><rect x="3" y="3" width="1" height="1"/><rect x="4" y="3" width="1" height="1"/><rect x="5" y="3" width="1" height="1"/><rect x="2" y="4" width="1" height="1"/><rect x="3" y="4" width="1" height="1"/><rect x="4" y="4" width="1" height="1"/><rect x="3" y="5" width="1" height="1"/></svg>
<div class="a" style="left:16px;top:657px;width:721px;height:18px;background:#f0f0f0"></div>
<svg class="a" style="left:23px;top:661px" width="6" height="7" viewBox="0 0 6 7" shape-rendering="crispEdges" fill="#b4b4b4"><rect x="0" y="3" width="1" height="1"/><rect x="1" y="2" width="1" height="1"/><rect x="1" y="3" width="1" height="1"/><rect x="1" y="4" width="1" height="1"/><rect x="2" y="1" width="1" height="1"/><rect x="2" y="2" width="1" height="1"/><rect x="2" y="3" width="1" height="1"/><rect x="2" y="4" width="1" height="1"/><rect x="2" y="5" width="1" height="1"/><rect x="3" y="0" width="1" height="1"/><rect x="3" y="1" width="1" height="1"/><rect x="3" y="2" width="1" height="1"/><rect x="3" y="4" width="1" height="1"/><rect x="3" y="5" width="1" height="1"/><rect x="3" y="6" width="1" height="1"/><rect x="4" y="0" width="1" height="1"/><rect x="4" y="1" width="1" height="1"/><rect x="4" y="5" width="1" height="1"/><rect x="4" y="6" width="1" height="1"/><rect x="5" y="0" width="1" height="1"/><rect x="5" y="6" width="1" height="1"/></svg>
<svg class="a" style="left:725px;top:661px" width="6" height="7" viewBox="0 0 6 7" shape-rendering="crispEdges" fill="#b4b4b4"><rect x="5" y="3" width="1" height="1"/><rect x="4" y="2" width="1" height="1"/><rect x="4" y="3" width="1" height="1"/><rect x="4" y="4" width="1" height="1"/><rect x="3" y="1" width="1" height="1"/><rect x="3" y="2" width="1" height="1"/><rect x="3" y="3" width="1" height="1"/><rect x="3" y="4" width="1" height="1"/><rect x="3" y="5" width="1" height="1"/><rect x="2" y="0" width="1" height="1"/><rect x="2" y="1" width="1" height="1"/><rect x="2" y="2" width="1" height="1"/><rect x="2" y="4" width="1" height="1"/><rect x="2" y="5" width="1" height="1"/><rect x="2" y="6" width="1" height="1"/><rect x="1" y="0" width="1" height="1"/><rect x="1" y="1" width="1" height="1"/><rect x="1" y="5" width="1" height="1"/><rect x="1" y="6" width="1" height="1"/><rect x="0" y="0" width="1" height="1"/><rect x="0" y="6" width="1" height="1"/></svg>
</body></html>
